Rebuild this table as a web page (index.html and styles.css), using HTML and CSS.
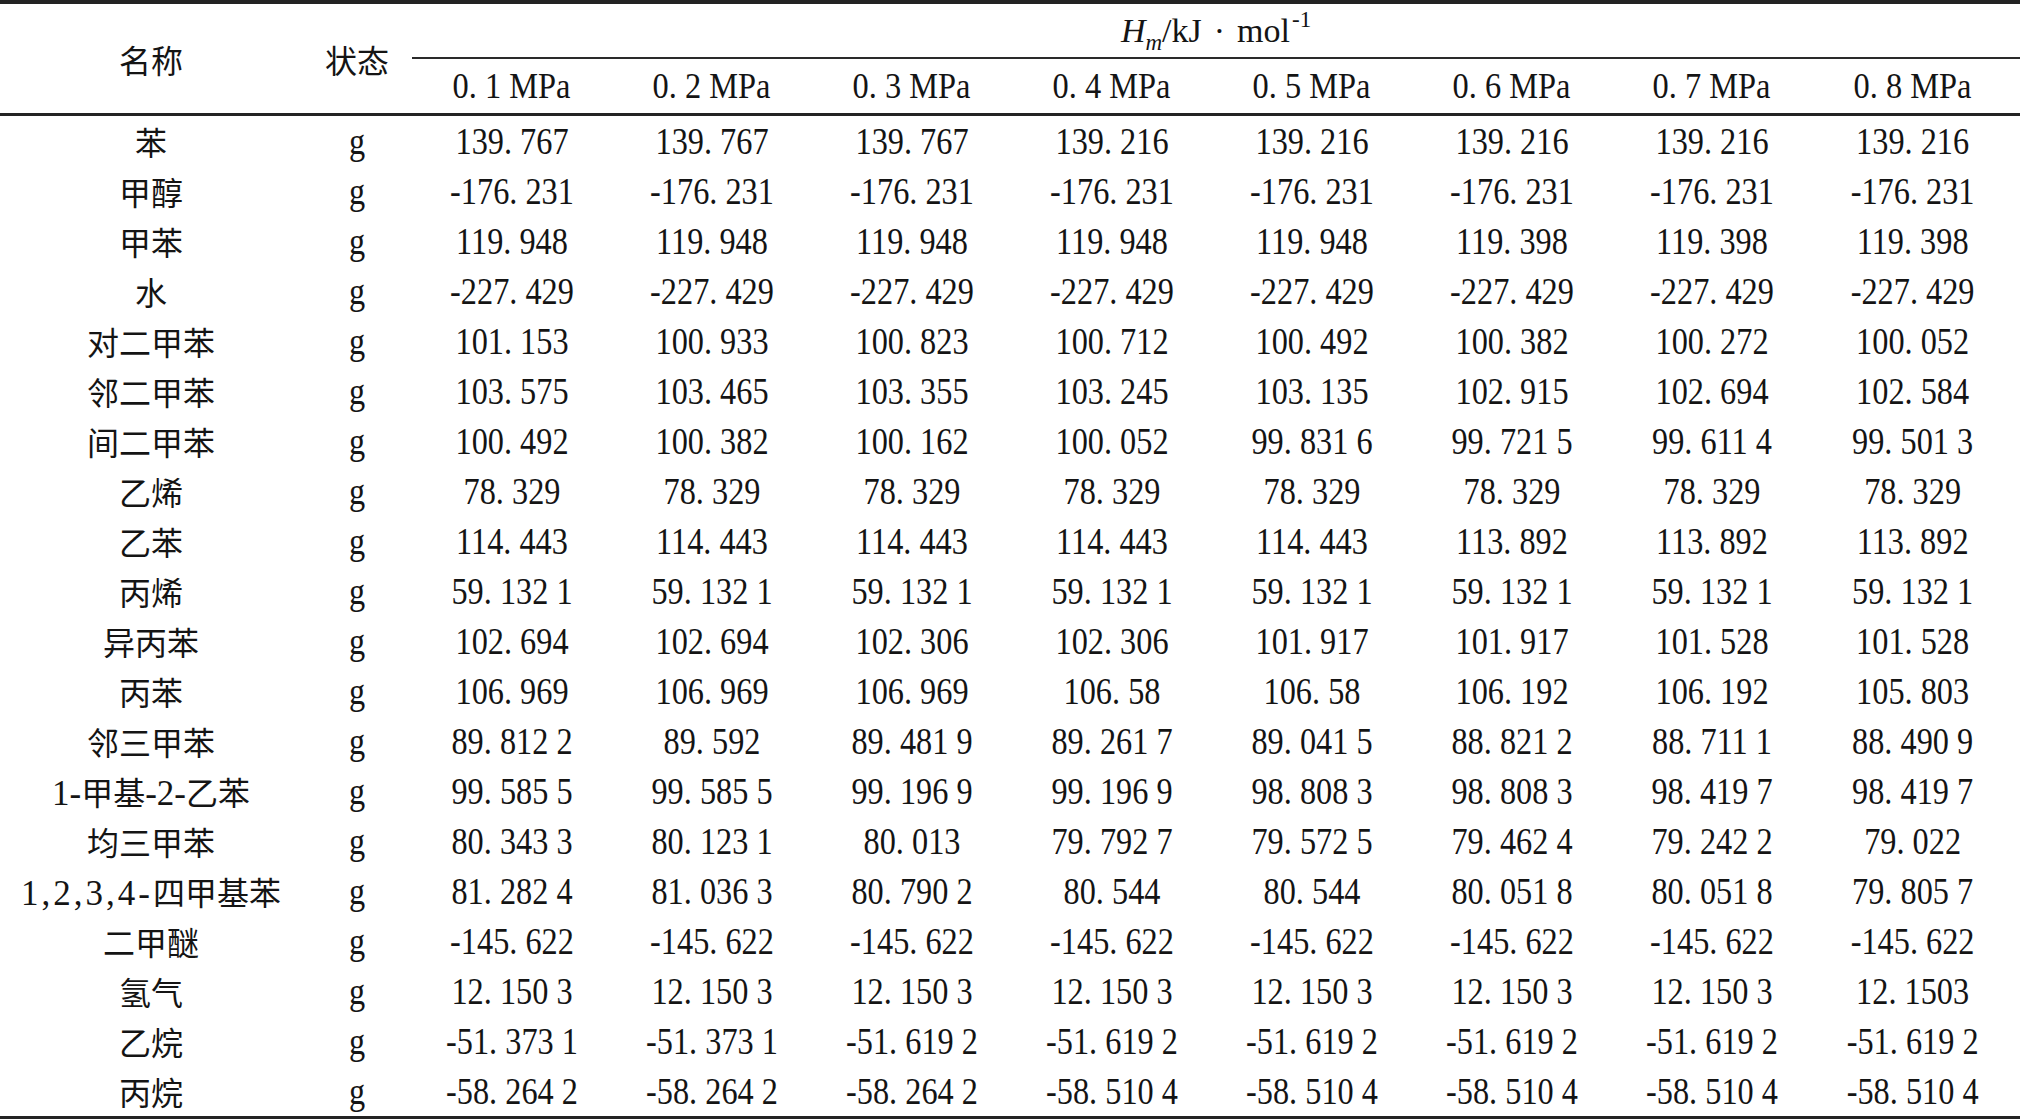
FILE: index.html
```html
<!DOCTYPE html>
<html lang="zh-CN">
<head>
<meta charset="utf-8">
<title>Hm 表</title>
<link rel="stylesheet" href="styles.css">
</head>
<body>
<table class="tbl">
<colgroup>
<col class="c-name"><col class="c-state">
<col class="c-p"><col class="c-p"><col class="c-p"><col class="c-p"><col class="c-p"><col class="c-p"><col class="c-p"><col class="c-last">
</colgroup>
<thead>
<tr class="hr1">
<th class="hcj" rowspan="2">名称</th>
<th class="hcj" rowspan="2">状态</th>
<th class="hm" colspan="8"><i>H</i><sub><i>m</i></sub>/kJ<span class="dot">·</span>mol<sup>-1</sup></th>
</tr>
<tr class="hr2">
<th class="hp"><span class="sc">0. 1 MPa</span></th>
<th class="hp"><span class="sc">0. 2 MPa</span></th>
<th class="hp"><span class="sc">0. 3 MPa</span></th>
<th class="hp"><span class="sc">0. 4 MPa</span></th>
<th class="hp"><span class="sc">0. 5 MPa</span></th>
<th class="hp"><span class="sc">0. 6 MPa</span></th>
<th class="hp"><span class="sc">0. 7 MPa</span></th>
<th class="hp last"><span class="sc">0. 8 MPa</span></th>
</tr>
</thead>
<tbody>
<tr><td>苯</td><td>g</td><td>139. 767</td><td>139. 767</td><td>139. 767</td><td>139. 216</td><td>139. 216</td><td>139. 216</td><td>139. 216</td><td>139. 216</td></tr>
<tr><td>甲醇</td><td>g</td><td>-176. 231</td><td>-176. 231</td><td>-176. 231</td><td>-176. 231</td><td>-176. 231</td><td>-176. 231</td><td>-176. 231</td><td>-176. 231</td></tr>
<tr><td>甲苯</td><td>g</td><td>119. 948</td><td>119. 948</td><td>119. 948</td><td>119. 948</td><td>119. 948</td><td>119. 398</td><td>119. 398</td><td>119. 398</td></tr>
<tr><td>水</td><td>g</td><td>-227. 429</td><td>-227. 429</td><td>-227. 429</td><td>-227. 429</td><td>-227. 429</td><td>-227. 429</td><td>-227. 429</td><td>-227. 429</td></tr>
<tr><td>对二甲苯</td><td>g</td><td>101. 153</td><td>100. 933</td><td>100. 823</td><td>100. 712</td><td>100. 492</td><td>100. 382</td><td>100. 272</td><td>100. 052</td></tr>
<tr><td>邻二甲苯</td><td>g</td><td>103. 575</td><td>103. 465</td><td>103. 355</td><td>103. 245</td><td>103. 135</td><td>102. 915</td><td>102. 694</td><td>102. 584</td></tr>
<tr><td>间二甲苯</td><td>g</td><td>100. 492</td><td>100. 382</td><td>100. 162</td><td>100. 052</td><td>99. 831 6</td><td>99. 721 5</td><td>99. 611 4</td><td>99. 501 3</td></tr>
<tr><td>乙烯</td><td>g</td><td>78. 329</td><td>78. 329</td><td>78. 329</td><td>78. 329</td><td>78. 329</td><td>78. 329</td><td>78. 329</td><td>78. 329</td></tr>
<tr><td>乙苯</td><td>g</td><td>114. 443</td><td>114. 443</td><td>114. 443</td><td>114. 443</td><td>114. 443</td><td>113. 892</td><td>113. 892</td><td>113. 892</td></tr>
<tr><td>丙烯</td><td>g</td><td>59. 132 1</td><td>59. 132 1</td><td>59. 132 1</td><td>59. 132 1</td><td>59. 132 1</td><td>59. 132 1</td><td>59. 132 1</td><td>59. 132 1</td></tr>
<tr><td>异丙苯</td><td>g</td><td>102. 694</td><td>102. 694</td><td>102. 306</td><td>102. 306</td><td>101. 917</td><td>101. 917</td><td>101. 528</td><td>101. 528</td></tr>
<tr><td>丙苯</td><td>g</td><td>106. 969</td><td>106. 969</td><td>106. 969</td><td>106. 58</td><td>106. 58</td><td>106. 192</td><td>106. 192</td><td>105. 803</td></tr>
<tr><td>邻三甲苯</td><td>g</td><td>89. 812 2</td><td>89. 592</td><td>89. 481 9</td><td>89. 261 7</td><td>89. 041 5</td><td>88. 821 2</td><td>88. 711 1</td><td>88. 490 9</td></tr>
<tr><td><span class="lat">1-</span>甲基<span class="lat">-2-</span>乙苯</td><td>g</td><td>99. 585 5</td><td>99. 585 5</td><td>99. 196 9</td><td>99. 196 9</td><td>98. 808 3</td><td>98. 808 3</td><td>98. 419 7</td><td>98. 419 7</td></tr>
<tr><td>均三甲苯</td><td>g</td><td>80. 343 3</td><td>80. 123 1</td><td>80. 013</td><td>79. 792 7</td><td>79. 572 5</td><td>79. 462 4</td><td>79. 242 2</td><td>79. 022</td></tr>
<tr><td><span class="lat spaced">1,2,3,4-</span>四甲基苯</td><td>g</td><td>81. 282 4</td><td>81. 036 3</td><td>80. 790 2</td><td>80. 544</td><td>80. 544</td><td>80. 051 8</td><td>80. 051 8</td><td>79. 805 7</td></tr>
<tr><td>二甲醚</td><td>g</td><td>-145. 622</td><td>-145. 622</td><td>-145. 622</td><td>-145. 622</td><td>-145. 622</td><td>-145. 622</td><td>-145. 622</td><td>-145. 622</td></tr>
<tr><td>氢气</td><td>g</td><td>12. 150 3</td><td>12. 150 3</td><td>12. 150 3</td><td>12. 150 3</td><td>12. 150 3</td><td>12. 150 3</td><td>12. 150 3</td><td>12. 1503</td></tr>
<tr><td>乙烷</td><td>g</td><td>-51. 373 1</td><td>-51. 373 1</td><td>-51. 619 2</td><td>-51. 619 2</td><td>-51. 619 2</td><td>-51. 619 2</td><td>-51. 619 2</td><td>-51. 619 2</td></tr>
<tr><td>丙烷</td><td>g</td><td>-58. 264 2</td><td>-58. 264 2</td><td>-58. 264 2</td><td>-58. 510 4</td><td>-58. 510 4</td><td>-58. 510 4</td><td>-58. 510 4</td><td>-58. 510 4</td></tr>
</tbody>
</table>
</body>
</html>
```
FILE: styles.css
```css
html, body {
  margin: 0;
  padding: 0;
  background: #ffffff;
}

.tbl {
  width: 2020px;
  table-layout: fixed;
  border-collapse: separate;
  border-spacing: 0;
  border-top: 4px solid #232323;
  border-bottom: 4px solid #232323;
  font-family: "Liberation Serif", "Noto Sans CJK SC", serif;
  color: #141414;
}

.c-name { width: 302px; }
.c-state { width: 110px; }
.c-p { width: 200px; }
.c-last { width: 208px; }

.tbl th,
.tbl td {
  padding: 0;
  text-align: center;
  vertical-align: middle;
  font-weight: normal;
  white-space: nowrap;
}

.hr1 { height: 55px; }
.hr2 { height: 57px; }
.tbl tbody tr { height: 50px; }

.hcj {
  font-size: 32px;
  border-bottom: 3px solid #232323;
}

.hm {
  font-size: 34px;
  border-bottom: 2px solid #2a2a2a;
  line-height: 1;
  padding-top: 4px;
}

.hm sub {
  font-size: 23px;
  vertical-align: -8px;
  line-height: 0;
}

.hm sup {
  font-size: 23px;
  vertical-align: 15px;
  line-height: 0;
  margin-left: 2px;
}

.dot {
  margin: 0 12px;
}

.hp {
  font-size: 36px;
  border-bottom: 3px solid #232323;
}

.hp.last {
  padding-right: 8px;
}

.sc {
  display: inline-block;
  transform: scaleX(0.9);
}

.tbl tbody td {
  font-size: 38px;
}

.tbl tbody td:first-child {
  font-size: 32px;
}

.tbl tbody td:nth-child(n+2) {
  transform: scaleX(0.85);
}

.tbl tbody td:last-child {
  padding-right: 8px;
}

.lat {
  font-size: 35px;
}

.spaced {
  letter-spacing: 3px;
}
```
